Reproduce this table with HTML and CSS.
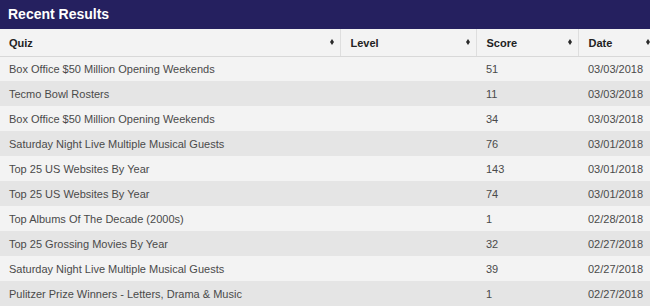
FILE: index.html
```html
<!DOCTYPE html>
<html>
<head>
<meta charset="utf-8">
<link rel="stylesheet" href="styles.css">
</head>
<body>
<div class="panel">
  <div class="panel-title">Recent Results</div>
  <table class="results">
    <colgroup>
      <col class="c-quiz"><col class="c-level"><col class="c-score"><col class="c-date">
    </colgroup>
    <thead>
      <tr>
        <th><span>Quiz</span><i class="sort"></i></th>
        <th><span>Level</span><i class="sort"></i></th>
        <th><span>Score</span><i class="sort"></i></th>
        <th><span>Date</span><i class="sort"></i></th>
      </tr>
    </thead>
    <tbody>
      <tr><td>Box Office $50 Million Opening Weekends</td><td></td><td>51</td><td>03/03/2018</td></tr>
      <tr><td>Tecmo Bowl Rosters</td><td></td><td>11</td><td>03/03/2018</td></tr>
      <tr><td>Box Office $50 Million Opening Weekends</td><td></td><td>34</td><td>03/03/2018</td></tr>
      <tr><td>Saturday Night Live Multiple Musical Guests</td><td></td><td>76</td><td>03/01/2018</td></tr>
      <tr><td>Top 25 US Websites By Year</td><td></td><td>143</td><td>03/01/2018</td></tr>
      <tr><td>Top 25 US Websites By Year</td><td></td><td>74</td><td>03/01/2018</td></tr>
      <tr><td>Top Albums Of The Decade (2000s)</td><td></td><td>1</td><td>02/28/2018</td></tr>
      <tr><td>Top 25 Grossing Movies By Year</td><td></td><td>32</td><td>02/27/2018</td></tr>
      <tr><td>Saturday Night Live Multiple Musical Guests</td><td></td><td>39</td><td>02/27/2018</td></tr>
      <tr><td>Pulitzer Prize Winners - Letters, Drama &amp; Music</td><td></td><td>1</td><td>02/27/2018</td></tr>
    </tbody>
  </table>
</div>
</body>
</html>
```
FILE: styles.css
```css
html, body {
  margin: 0;
  padding: 0;
  overflow: hidden;
  background: #ffffff;
}
body {
  font-family: "Liberation Sans", Arial, sans-serif;
}
.panel {
  width: 656px;
}
.panel-title {
  height: 29px;
  box-sizing: border-box;
  background: #25205f;
  color: #ffffff;
  font-weight: bold;
  font-size: 14px;
  line-height: 29px;
  padding-left: 8px;
}
.results {
  width: 656px;
  border-collapse: collapse;
  table-layout: fixed;
  font-size: 11px;
}
.c-quiz { width: 340px; }
.c-level { width: 136px; }
.c-score { width: 102px; }
.c-date { width: 78px; }
.results th {
  height: 27px;
  box-sizing: border-box;
  background: #f3f3f3;
  color: #222;
  text-align: left;
  font-weight: bold;
  padding: 0 8px 0 10px;
  border-left: 1px solid #dedede;
  border-bottom: 1px solid #d8d8d8;
  position: relative;
}
.results th:first-child {
  border-left: none;
  padding-left: 9px;
}
.results th span {
  vertical-align: middle;
}
.sort {
  position: absolute;
  right: 6px;
  top: 50%;
  margin-top: -3px;
  width: 4px;
  height: 6px;
}
.sort::before, .sort::after {
  content: "";
  position: absolute;
  left: 0;
  border-left: 2px solid transparent;
  border-right: 2px solid transparent;
}
.sort::before {
  top: 0;
  border-bottom: 3px solid #2a2a2a;
}
.sort::after {
  bottom: 0;
  border-top: 3px solid #2a2a2a;
}
.results td {
  height: 25px;
  box-sizing: border-box;
  padding: 0 0 0 10px;
  color: #4a4a4a;
  white-space: nowrap;
}
.results td:first-child {
  padding-left: 9px;
}
.results tbody tr:nth-child(odd) td {
  background: #f3f3f3;
}
.results tbody tr:nth-child(even) td {
  background: #e5e5e5;
}
```
